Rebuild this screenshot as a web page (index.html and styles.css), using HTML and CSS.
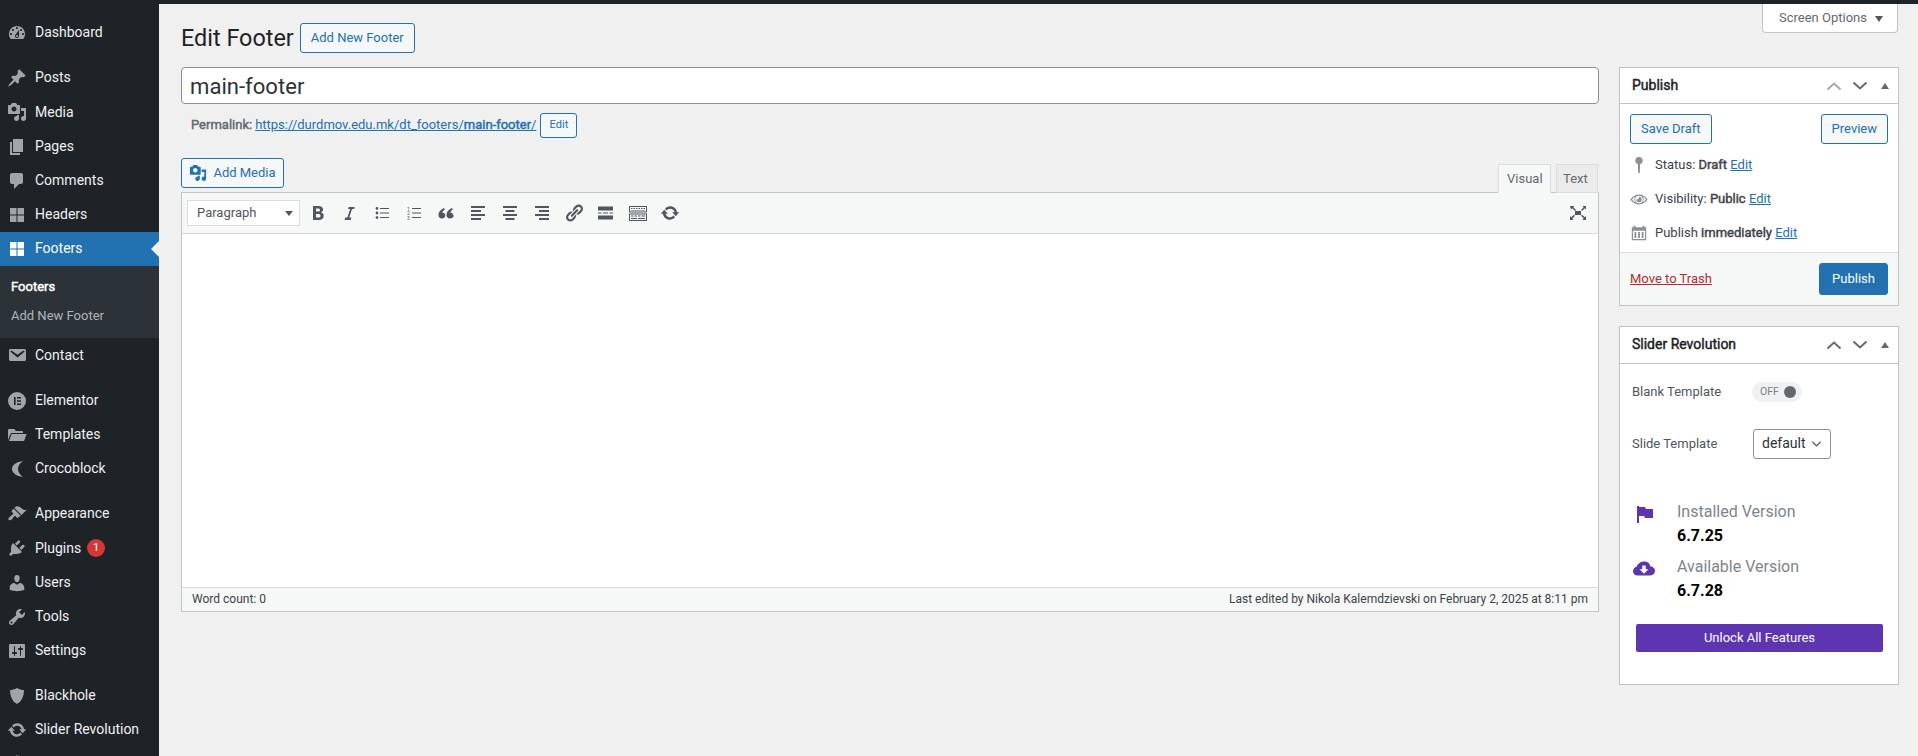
FILE: index.html
```html
<!DOCTYPE html>
<html lang="en">
<head>
<meta charset="utf-8">
<title>Edit Footer</title>
<link rel="stylesheet" href="styles.css">
</head>
<body>
<div class="topstrip"></div>
<div class="layout">
  <nav class="sidebar">
    <ul class="menu">
      <li class="item"><svg class="ico" viewBox="0 0 20 20"><path d="M3.76 16h12.48c1.1-1.37 1.76-3.11 1.76-5 0-4.42-3.58-8-8-8s-8 3.58-8 8c0 1.89.66 3.63 1.76 5zM10 4c.55 0 1 .45 1 1s-.45 1-1 1-1-.45-1-1 .45-1 1-1zM6 6c.55 0 1 .45 1 1s-.45 1-1 1-1-.45-1-1 .45-1 1-1zm8 0c.55 0 1 .45 1 1s-.45 1-1 1-1-.45-1-1 .45-1 1-1zm-5.37 5.55L12 7v6c0 1.1-.9 2-2 2s-2-.9-2-2c0-.57.24-1.08.63-1.45zM4 10c.55 0 1 .45 1 1s-.45 1-1 1-1-.45-1-1 .45-1 1-1zm12 0c.55 0 1 .45 1 1s-.45 1-1 1-1-.45-1-1 .45-1 1-1zm-5 3c0-.55-.45-1-1-1s-1 .45-1 1 .45 1 1 1 1-.45 1-1z"/></svg>Dashboard</li>
      <li class="sep"></li>
      <li class="item"><svg class="ico" viewBox="0 0 20 20"><path d="M10.44 3.02l1.82-1.82 6.36 6.35-1.83 1.82c-1.05-.68-2.48-.57-3.41.36l-.75.75c-.92.93-1.04 2.35-.35 3.41l-1.83 1.82-2.41-2.41-2.8 2.79c-.42.42-3.38 2.71-3.8 2.29s1.86-3.39 2.28-3.81l2.79-2.79L4.1 9.36l1.83-1.82c1.05.69 2.48.57 3.4-.36l.75-.75c.93-.92 1.05-2.35.36-3.41z"/></svg>Posts</li>
      <li class="item"><svg class="ico" viewBox="0 0 20 20"><path d="M13 11V4c0-.55-.45-1-1-1h-1.67L9 1H5L3.67 3H2c-.55 0-1 .45-1 1v7c0 .55.45 1 1 1h10c.55 0 1-.45 1-1zM7 4.5c1.38 0 2.5 1.12 2.5 2.5S8.38 9.5 7 9.5 4.5 8.38 4.5 7 5.62 4.5 7 4.5zM14 6h5v10.5c0 1.38-1.12 2.5-2.5 2.5S14 17.88 14 16.5s1.12-2.5 2.5-2.5c.17 0 .34.02.5.05V9h-3V6zm-4 8.05V13h2v3.5c0 1.38-1.12 2.5-2.5 2.5S7 17.88 7 16.5 8.12 14 9.5 14c.17 0 .34.02.5.05z"/></svg>Media</li>
      <li class="item"><svg class="ico" viewBox="0 0 20 20"><path d="M6 15V2h10v13H6zm-1 1h8v2H3V5h2v11z"/></svg>Pages</li>
      <li class="item"><svg class="ico" viewBox="0 0 20 20"><path d="M5 2h9c1.1 0 2 .9 2 2v7c0 1.1-.9 2-2 2h-2l-5 5v-5H5c-1.1 0-2-.9-2-2V4c0-1.1.9-2 2-2z"/></svg>Comments</li>
      <li class="item"><svg class="ico" viewBox="0 0 20 20"><path d="M3 3h6.500v6.500H3zM10.500 3H17v6.500h-6.500zM3 10.500h6.500V17H3zM10.500 10.500H17V17h-6.500z"/></svg>Headers</li>
      <li class="item current"><svg class="ico" viewBox="0 0 20 20"><path d="M3 3h6.500v6.500H3zM10.500 3H17v6.500h-6.500zM3 10.500h6.500V17H3zM10.500 10.500H17V17h-6.500z"/></svg>Footers</li>
      <li class="submenu">
        <div class="subitem subcurrent">Footers</div>
        <div class="subitem">Add New Footer</div>
      </li>
      <li class="item"><svg class="ico" viewBox="0 0 20 20"><path d="M3.870 4h13.250C18.370 4 19 4.590 19 5.790v8.420c0 1.190-.63 1.790-1.880 1.790H3.870c-1.250 0-1.880-.6-1.880-1.790V5.790c0-1.200.63-1.790 1.880-1.790zm6.620 8.600l6.740-5.530c.24-.2.43-.66.13-1.070-.29-.41-.82-.42-1.170-.17l-5.700 3.860L4.800 5.830c-.35-.25-.88-.24-1.170.17-.3.41-.11.870.13 1.070z"/></svg>Contact</li>
      <li class="sep"></li>
      <li class="item"><svg class="ico" viewBox="0 0 20 20"><path fill-rule="evenodd" d="M10 1a9 9 0 1 0 0 18 9 9 0 0 0 0-18zM7 6h1.600v8H7zM10 6h4v1.600h-4zM10 9.200h4v1.600h-4zM10 12.400h4V14h-4z"/></svg>Elementor</li>
      <li class="item"><svg class="ico" viewBox="0 0 20 20"><path d="M1 5.500V15l2.800-6.500c.2-.4.5-.6 1-.6H16V6.800c0-.5-.4-.9-.9-.9H9L7.400 4H1.900C1.400 4 1 4.500 1 5.500zM4.700 9L2 16h14.400c.4 0 .7-.2.9-.6L19.600 9z"/></svg>Templates</li>
      <li class="item"><svg class="ico" viewBox="0 0 20 20"><path d="M16 2.300C9.500 2.600 5 6 5 10s4.500 7.400 11 7.700c-3-1.800-5-4.500-5-7.700s2-5.900 5-7.700z"/></svg>Crocoblock</li>
      <li class="sep"></li>
      <li class="item"><svg class="ico" viewBox="0 0 20 20"><path d="M14.480 11.060L7.410 3.990l1.500-1.500c.5-.56 2.300-.47 3.510.32 1.210.8 1.430 1.280 2.910 2.100 1.180.64 2.450 1.260 4.450.85zm-.71.71L6.700 4.700 4.930 6.470c-.39.39-.39 1.020 0 1.410l1.060 1.060c.39.39.39 1.030 0 1.420-.6.6-1.430 1.110-2.210 1.690-.35.26-.7.53-1.010.84C1.430 13.710.96 15.120 1.750 15.910s2.200.32 3.010-.35c.31-.32.58-.67.84-1.020.58-.78 1.090-1.610 1.690-2.210.39-.39 1.020-.39 1.410 0l1.060 1.060c.39.39 1.020.39 1.410 0z"/></svg>Appearance</li>
      <li class="item"><svg class="ico" viewBox="0 0 20 20"><path d="M13.110 4.360L9.870 7.600 8 5.730l3.240-3.240c.35-.34 1.050-.2 1.560.32.52.51.66 1.210.31 1.550zm-8 1.770l.91-1.120 9.010 9.010-1.190.84c-.71.71-2.630 1.160-3.820 1.160H6.140L4.900 17.260c-.59.59-1.540.59-2.120 0-.59-.58-.59-1.530 0-2.120l1.240-1.240v-3.880c0-1.130.4-3.190 1.090-3.890zm7.260 3.970l3.240-3.240c.34-.35 1.040-.21 1.550.31.52.51.66 1.210.31 1.550l-3.240 3.250z"/></svg>Plugins<span class="badge">1</span></li>
      <li class="item"><svg class="ico" viewBox="0 0 20 20"><path d="M10 9.250c-2.270 0-2.730-3.440-2.730-3.440C7 4.020 7.820 2 9.970 2c2.160 0 2.980 2.020 2.710 3.810 0 0-.41 3.440-2.680 3.440zm0 2.570L12.720 10c2.390 0 4.520 2.330 4.520 4.530v2.490s-3.650 1.130-7.240 1.130c-3.650 0-7.240-1.130-7.240-1.130v-2.490c0-2.250 1.940-4.480 4.470-4.480z"/></svg>Users</li>
      <li class="item"><svg class="ico" viewBox="0 0 20 20"><path d="M16.680 9.770c-1.340 1.340-3.300 1.670-4.950.99l-5.410 6.520c-.99.99-2.590.99-3.580 0s-.99-2.590 0-3.570l6.520-5.420c-.68-1.650-.35-3.610.99-4.950 1.280-1.280 3.120-1.620 4.720-1.060l-2.890 2.890 2.820 2.820 2.860-2.870c.53 1.580.18 3.390-1.080 4.650zM3.810 16.210c.4.39 1.040.39 1.430 0 .4-.4.4-1.040 0-1.430-.39-.4-1.030-.4-1.430 0-.39.39-.39 1.030 0 1.430z"/></svg>Tools</li>
      <li class="item"><svg class="ico" viewBox="0 0 20 20"><path d="M18 16V4c0-.55-.45-1-1-1H3c-.55 0-1 .45-1 1v12c0 .55.45 1 1 1h14c.55 0 1-.45 1-1zM8 11h1c.55 0 1 .45 1 1s-.45 1-1 1H8v1.500c0 .28-.22.5-.5.5s-.5-.22-.5-.5V13H6c-.55 0-1-.45-1-1s.45-1 1-1h1V5.500c0-.28.22-.5.5-.5s.5.22.5.5V11zm5-2h-1c-.55 0-1-.45-1-1s.45-1 1-1h1V5.500c0-.28.22-.5.5-.5s.5.22.5.5V7h1c.55 0 1 .45 1 1s-.45 1-1 1h-1v5.500c0 .28-.22.5-.5.5s-.5-.22-.5-.5V9z"/></svg>Settings</li>
      <li class="sep"></li>
      <li class="item"><svg class="ico" viewBox="0 0 20 20"><path d="M10 2s3 2 7 2c0 11-7 14-7 14S3 15 3 4c4 0 7-2 7-2z"/></svg>Blackhole</li>
      <li class="item"><svg class="ico" viewBox="0 0 20 20"><path d="M10.200 3.280c3.530 0 6.430 2.610 6.920 6h2.080l-3.500 4-3.500-4h2.320c-.45-1.970-2.210-3.450-4.320-3.450-1.450 0-2.730.71-3.540 1.780L4.950 5.660C6.230 4.200 8.110 3.280 10.200 3.280zm-.4 13.440c-3.520 0-6.430-2.610-6.920-6H.8l3.500-4c1.170 1.330 2.330 2.670 3.500 4H5.480c.45 1.970 2.210 3.450 4.320 3.450 1.450 0 2.730-.71 3.540-1.780l1.710 1.950c-1.280 1.460-3.150 2.380-5.250 2.380z"/></svg>Slider Revolution</li>
      <li class="item"><svg class="ico" viewBox="0 0 20 20"><path d="M10 1l9 9-9 9-9-9z"/></svg></li>
    </ul>
  </nav>
  <main class="main">
    <header class="pagehead">
      <div class="titlewrap">
        <h1 class="title">Edit Footer</h1>
        <a class="btn btn-new">Add New Footer</a>
      </div>
      <div class="screen-options">Screen Options <span class="caret"></span></div>
    </header>
    <div class="columns">
      <section class="editor-col">
        <div class="title-input">main-footer</div>
        <div class="permalink">
          <strong class="perma-label faux">Permalink:</strong>
          <a class="perma-link">https://durdmov.edu.mk/dt_footers/<b class="faux">main-footer</b>/</a>
          <a class="btn btn-edit">Edit</a>
        </div>
        <div class="editor-tools">
          <a class="btn btn-media"><svg class="media-ico" viewBox="0 0 20 20"><path d="M13 11V4c0-.55-.45-1-1-1h-1.670L9 1H5L3.670 3H2c-.55 0-1 .45-1 1v7c0 .55.45 1 1 1h10c.55 0 1-.45 1-1zM7 4.500c1.380 0 2.500 1.120 2.500 2.500S8.380 9.500 7 9.500 4.500 8.380 4.500 7 5.620 4.500 7 4.500zM14 6h5v10.500c0 1.380-1.120 2.500-2.500 2.500S14 17.880 14 16.500s1.120-2.500 2.500-2.500c.17 0 .34.02.5.05V9h-3V6zm-4 8.050V13h2v3.500c0 1.380-1.120 2.500-2.500 2.500S7 17.880 7 16.500 8.120 14 9.500 14c.17 0 .34.02.5.05z"/></svg>Add Media</a>
          <div class="tabs">
            <span class="tab tab-active">Visual</span>
            <span class="tab">Text</span>
          </div>
        </div>
        <div class="editor">
          <div class="toolbar">
            <div class="format-select">Paragraph<span class="select-caret"></span></div>
            <div class="tools">
              <svg class="tool" viewBox="0 0 20 20"><path fill-rule="evenodd" d="M5 3h5.500c2.800 0 4.500 1.200 4.500 3.500 0 1.500-.8 2.500-2 2.900 1.600.3 2.700 1.500 2.700 3.300 0 2.700-2 4.300-5 4.300H5zm3 2.400v3.200h2c1.300 0 2-.6 2-1.700 0-1-.7-1.500-2-1.500zm0 5.500v3.700h2.200c1.500 0 2.300-.7 2.300-1.900s-.8-1.800-2.300-1.800z"/></svg>
              <svg class="tool" viewBox="0 0 20 20"><path d="M14.780 4l-.62 2h-2.130l-2.800 8.500h2.120l-.62 2.500H4.600l.62-2.500h2.140l2.800-8.500H8.030l.62-2z"/></svg>
              <svg class="tool" viewBox="0 0 20 20"><path d="M5 6.800a1.400 1.400 0 1 1 0-2.800 1.400 1.400 0 0 1 0 2.800zM8 5h9v1H8zM5 11.400a1.400 1.400 0 1 1 0-2.800 1.400 1.400 0 0 1 0 2.800zM8 9.500h9v1H8zM5 16a1.400 1.400 0 1 1 0-2.800 1.400 1.400 0 0 1 0 2.800zM8 14h9v1H8z"/></svg>
              <svg class="tool" viewBox="0 0 20 20"><path d="M8 5h9v1H8zM8 9.500h9v1H8zM8 14h9v1H8z"/><text x="3" y="7.500" class="ol-num">1</text><text x="3" y="12" class="ol-num">2</text><text x="3" y="16.500" class="ol-num">3</text></svg>
              <svg class="tool" viewBox="0 0 20 20"><path d="M9.300 12.500c0-1.800-1.400-2.800-2.900-2.600.1-1.500 1-2.700 2.500-3.500L8 5C5 6.300 2.500 8.700 2.500 12c0 2.200 1.400 3.500 3.300 3.500s3.500-1.200 3.500-3zM17.300 12.500c0-1.800-1.400-2.800-2.900-2.600.1-1.500 1-2.700 2.500-3.500L16 5c-3 1.300-5.500 3.700-5.500 7 0 2.200 1.400 3.500 3.300 3.500s4-1.200 4-3z"/></svg>
              <svg class="tool" viewBox="0 0 20 20"><path d="M3 3h14v2H3zM3 7h10v2H3zM3 11h14v2H3zM3 15h10v2H3z"/></svg>
              <svg class="tool" viewBox="0 0 20 20"><path d="M3 3h14v2H3zM5.500 7h9v2h-9zM3 11h14v2H3zM5.500 15h9v2h-9z"/></svg>
              <svg class="tool" viewBox="0 0 20 20"><path d="M3 3h14v2H3zM7 7h10v2H7zM3 11h14v2H3zM7 15h10v2H7z"/></svg>
              <svg class="tool" viewBox="0 0 20 20"><path d="M17.740 2.760c1.680 1.690 1.680 4.410 0 6.100l-1.530 1.520c-1.120 1.120-2.700 1.470-4.140 1.090l2.620-2.610.76-.77.76-.76c.84-.84.84-2.200 0-3.040-.84-.85-2.200-.85-3.040 0l-.77.76-3.380 3.380c-.37-1.440-.02-3.020 1.100-4.140l1.520-1.530c1.690-1.680 4.420-1.680 6.100 0zM8.590 13.430l5.340-5.340c.42-.42.42-1.100 0-1.520-.44-.43-1.130-.39-1.530 0l-5.330 5.340c-.42.42-.42 1.100 0 1.520.44.43 1.130.39 1.520 0zm-.76 2.290l4.140-4.150c.38 1.440.03 3.020-1.090 4.140l-1.520 1.530c-1.690 1.680-4.410 1.680-6.100 0-1.680-1.680-1.680-4.420 0-6.100l1.530-1.520c1.120-1.120 2.700-1.470 4.140-1.100l-4.140 4.150c-.85.84-.85 2.200 0 3.050.84.84 2.200.84 3.040 0z"/></svg>
              <svg class="tool" viewBox="0 0 20 20"><path d="M2 3.500h15v4H2zM2 12.500h15v4H2zM2 9.500h3.500v1H2zM7 9.500h5v1H7zM13.500 9.500H17v1h-3.500z"/></svg>
              <svg class="tool" viewBox="0 0 20 20"><path fill-rule="evenodd" d="M1 3h18v6.500H1zm1 1v4.500h16V4zM3 5h1.500v1H3zM5.500 5H7v1H5.500zM8 5h1.500v1H8zM10.500 5H12v1h-1.500zM13 5h1.500v1H13zM15.500 5H17v1h-1.500zM3 7h14v.6H3zM1 10.500h18V18H1zm1 1V17h16v-5.500zM3 12.500h2.500v1H3zM6.500 12.500H9v1H6.500zM10 12.500h2.500v1H10zM13.500 12.500H17v1h-3.500zM3 15h6v1H3zM10 15h7v1h-7z"/></svg>
              <svg class="tool" viewBox="0 0 20 20"><path d="M10.200 3.280c3.530 0 6.430 2.610 6.920 6h2.080l-3.500 4-3.500-4h2.320c-.45-1.970-2.210-3.450-4.320-3.450-1.450 0-2.730.71-3.540 1.780L4.950 5.660C6.230 4.200 8.110 3.280 10.200 3.280zm-.4 13.440c-3.520 0-6.430-2.610-6.920-6H.8l3.500-4c1.170 1.330 2.330 2.670 3.500 4H5.480c.45 1.970 2.210 3.450 4.320 3.450 1.450 0 2.730-.71 3.540-1.780l1.710 1.950c-1.280 1.460-3.150 2.380-5.250 2.380z"/></svg>
            </div>
            <svg class="tool tool-full" viewBox="0 0 20 20"><path d="M7 8h6v4H7zM2 3h4.500L5.300 4.200 8 7 7 8 4.200 5.300 3 6.500zM18 3v3.500l-1.200-1.200L14 8l-1-1 2.700-2.800L14.500 3zM2 17v-4l1.200 1.300L6 11.800l1 1-2.700 2.600L5.500 17zM18 17h-3.500l1.200-1.600-2.700-2.600 1-1 2.800 2.500 1.200-1.300z"/></svg>
          </div>
          <div class="editor-body"></div>
          <div class="statusbar">
            <span>Word count: 0</span>
            <span>Last edited by Nikola Kalemdzievski on February 2, 2025 at 8:11 pm</span>
          </div>
        </div>
      </section>
      <aside class="side-col">
        <section class="box">
          <div class="box-head">
            <h2 class="box-title faux">Publish</h2>
            <div class="box-arrows">
              <svg class="chev chev-light" viewBox="0 0 16 10"><path d="M1.500 8.500L8 2.500l6.500 6"/></svg>
              <svg class="chev" viewBox="0 0 16 10"><path d="M1.500 1.500L8 7.500l6.500-6"/></svg>
              <span class="tri"></span>
            </div>
          </div>
          <div class="publish-main">
            <div class="publish-btns">
              <a class="btn">Save Draft</a>
              <a class="btn">Preview</a>
            </div>
            <div class="pub-row">
              <svg class="pub-ico" viewBox="0 0 20 20"><path d="M10 1a4 4 0 0 1 1.300 7.800L10.900 19H9.100L8.700 8.800A4 4 0 0 1 10 1z"/></svg>
              <span>Status: <b class="faux">Draft</b> <a class="link">Edit</a></span>
            </div>
            <div class="pub-row">
              <svg class="pub-ico" viewBox="0 0 20 20"><path fill-rule="evenodd" d="M10 5c4 0 7.500 2.300 9.500 5.500C17.500 13.700 14 16 10 16S2.500 13.700.5 10.500C2.500 7.300 6 5 10 5zm0 1.300a4.200 4.200 0 1 0 0 8.400 4.200 4.200 0 0 0 0-8.400zM2.300 10.500c1 1.400 2.300 2.500 3.700 3.200a5.500 5.500 0 0 1 0-6.400c-1.400.7-2.700 1.800-3.700 3.200zM14 7.300a5.500 5.500 0 0 1 0 6.400c1.400-.7 2.700-1.800 3.700-3.200-1-1.400-2.300-2.500-3.700-3.200zM10 7.500a3 3 0 1 1-3 3c1.500.5 3.300-1 3-3z"/></svg>
              <span>Visibility: <b class="faux">Public</b> <a class="link">Edit</a></span>
            </div>
            <div class="pub-row">
              <svg class="pub-ico" viewBox="0 0 20 20"><path fill-rule="evenodd" d="M2 3.500h2V2h2v1.500h8V2h2v1.500h2V18H2zM3.300 7.500v9.200h13.400V7.500zM5 9h2v6.500H5zM9 9h2v6.500H9zM13 9h2v6.500h-2z"/></svg>
              <span>Publish <b class="faux">immediately</b> <a class="link">Edit</a></span>
            </div>
          </div>
          <div class="publish-foot">
            <a class="trash">Move to Trash</a>
            <a class="btn btn-primary">Publish</a>
          </div>
        </section>
        <section class="box box-slider">
          <div class="box-head box-head-slider">
            <h2 class="box-title faux">Slider Revolution</h2>
            <div class="box-arrows">
              <svg class="chev" viewBox="0 0 16 10"><path d="M1.500 8.500L8 2.500l6.500 6"/></svg>
              <svg class="chev" viewBox="0 0 16 10"><path d="M1.500 1.500L8 7.500l6.500-6"/></svg>
              <span class="tri"></span>
            </div>
          </div>
          <div class="slider-body">
            <div class="sr-row sr-row-blank">
              <span class="sr-label">Blank Template</span>
              <span class="toggle">OFF<span class="knob"></span></span>
            </div>
            <div class="sr-row sr-row-slide">
              <span class="sr-label">Slide Template</span>
              <span class="sr-select">default<svg class="sr-chev" viewBox="0 0 12 8"><path d="M1.500 1.500L6 6l4.500-4.500"/></svg></span>
            </div>
            <div class="version version-first">
              <svg class="ver-ico ver-flag" viewBox="0 0 24 24"><path d="M4 3h2v1h6l1 2h7v9h-8l-1-2H6v7H4z"/></svg>
              <div><div class="ver-label">Installed Version</div><div class="ver-num">6.7.25</div></div>
            </div>
            <div class="version">
              <svg class="ver-ico ver-cloud" viewBox="0 0 24 24"><path fill-rule="evenodd" d="M12.500 4.500c3 0 5.300 2 5.900 4.800 2.700.2 4.600 2.100 4.600 4.500 0 2.600-2.200 4.700-4.900 4.700H5.500C2.800 18.500 1 16.500 1 14.200c0-2.200 1.500-4 3.600-4.500C5.700 6.700 8.800 4.500 12.500 4.500zM10.300 8.500v3.800H7.500l4.500 4.500 4.500-4.500h-2.800V8.500z"/></svg>
              <div><div class="ver-label">Available Version</div><div class="ver-num">6.7.28</div></div>
            </div>
            <a class="unlock">Unlock All Features</a>
          </div>
        </section>
      </aside>
    </div>
  </main>
</div>
</body>
</html>
```

FILE: styles.css
```css
* { box-sizing: border-box; }
html, body { margin: 0; padding: 0; height: 756px; overflow: hidden; }
body { background: #f0f0f1; color: #3c434a; font: 13px/1.4 Roboto, "Liberation Sans", sans-serif; }
a { cursor: pointer; }
.faux { font-weight: 400; -webkit-text-stroke: 0.45px currentColor; }
.topstrip { height: 4px; background: #1d2327; }
.layout { display: flex; height: 752px; }

.sidebar { width: 159px; flex: none; background: #1d2327; overflow: hidden; padding-top: 12px; }
.menu { list-style: none; margin: 0; padding: 0; }
.item { display: flex; align-items: center; height: 34.2px; padding-left: 7px; color: #f0f0f1; font-size: 14px; position: relative; }
.ico { width: 20px; height: 20px; margin-right: 8px; fill: #a0a5aa; flex: none; }
.sep { height: 11px; }
.current { background: #2271b1; color: #fff; }
.current .ico { fill: #fff; }
.current::after { content: ""; position: absolute; right: 0; top: 50%; margin-top: -8px; border: 8px solid transparent; border-right-color: #f0f0f1; }
.submenu { background: #2c3338; height: 72px; padding: 6px 0; }
.subitem { font-size: 13px; height: 29px; line-height: 29px; padding-left: 11px; color: #b0b5ba; }
.subcurrent { color: #fff; -webkit-text-stroke: 0.45px currentColor; }
.badge { width: 18px; height: 18px; border-radius: 50%; background: #d63638; color: #fff; font-size: 11px; line-height: 18px; text-align: center; margin-left: 6px; }

.main { flex: 1; min-width: 0; padding: 0 19px 0 22px; }
.pagehead { display: flex; justify-content: space-between; align-items: flex-start; height: 63px; }
.titlewrap { display: flex; align-items: center; padding-top: 19px; }
.title { margin: 0 6px 0 0; font-size: 23.4px; font-weight: 400; line-height: 30px; color: #1d2327; }
.screen-options { width: 136px; height: 29px; margin-right: 1px; background: #fff; border: 1px solid #c3c4c7; border-top: 0; border-radius: 0 0 4px 4px; color: #646970; font-size: 13px; line-height: 28px; padding-left: 16px; }
.caret { display: inline-block; margin-left: 5px; border: 4.5px solid transparent; border-top: 6px solid #50575e; border-bottom: 0; vertical-align: 0; }

.btn { display: inline-flex; align-items: center; justify-content: center; height: 30px; padding: 0 10px; border: 1px solid #2271b1; border-radius: 3px; background: #f6f7f7; color: #2271b1; font-size: 13px; }
.btn-new { width: 115px; padding: 0; }

.columns { display: grid; grid-template-columns: 1418px 280px; column-gap: 20px; align-items: start; }
.title-input { height: 37px; background: #fff; border: 1px solid #8c8f94; border-radius: 4px; font-size: 22.1px; line-height: 36px; padding-left: 8px; color: #2c3338; }
.permalink { display: flex; align-items: center; height: 26px; margin-top: 8px; padding-left: 10px; color: #646970; font-size: 13px; }
.perma-label { margin-right: 3px; }
.perma-link { color: #2271b1; text-decoration: underline; }
.btn-edit { height: 25px; padding: 0 8px; font-size: 11px; margin-left: 4px; width: 37px; }

.editor-tools { display: flex; justify-content: space-between; align-items: flex-end; margin-top: 20px; height: 34px; }
.btn-media { width: 103px; align-self: flex-start; padding: 0; }
.media-ico { width: 18px; height: 18px; fill: #2271b1; margin-right: 6px; }
.tabs { display: flex; gap: 5px; margin-right: 1px; position: relative; top: 1px; }
.tab { height: 29px; padding: 0 8px; line-height: 27px; background: #ebebeb; border: 1px solid #dcdcde; color: #646970; font-size: 13px; }
.tab-active { background: #f6f7f7; border-color: #dcdcde #dcdcde #f6f7f7; width: 53px; }
.tab:not(.tab-active) { width: 42px; padding: 0 6px; }

.editor { border: 1px solid #c3c4c7; background: #fff; }
.toolbar { display: flex; align-items: center; height: 41px; background: #f6f7f7; border-bottom: 1px solid #dcdcde; padding-left: 5px; padding-right: 10px; }
.format-select { position: relative; width: 113px; height: 26px; background: #fff; border: 1px solid #dcdcde; font-size: 13px; color: #50575e; line-height: 24px; padding-left: 9px; }
.select-caret { position: absolute; right: 6px; top: 10px; border: 4px solid transparent; border-top: 5px solid #50575e; border-bottom: 0; }
.tools { display: flex; gap: 12px; margin-left: 8px; }
.tool { width: 20px; height: 20px; fill: #50575e; flex: none; }
.ol-num { font: 5px Roboto, sans-serif; }
.tool-full { margin-left: auto; }
.editor-body { height: 353px; background: #fff; }
.statusbar { display: flex; justify-content: space-between; align-items: center; height: 24px; background: #f6f7f7; border-top: 1px solid #dcdcde; padding: 0 10px; font-size: 12px; color: #3c434a; }

.side-col { display: flex; flex-direction: column; gap: 20px; }
.box { background: #fff; border: 1px solid #c3c4c7; }
.box-head { display: flex; align-items: center; justify-content: space-between; height: 36px; border-bottom: 1px solid #c3c4c7; padding: 0 9px 0 12px; }
.box-head-slider { height: 37px; }
.box-title { margin: 0; font-size: 14px; color: #1d2327; }
.box-arrows { display: flex; align-items: center; gap: 10px; }
.chev { width: 16px; height: 10px; fill: none; stroke: #646970; stroke-width: 2; }
.chev-light { stroke: #a7aaad; }
.tri { border: 4px solid transparent; border-bottom: 6px solid #646970; border-top: 0; margin-left: 3px; }
.publish-main { padding: 10px 10px 2px; }
.publish-btns { display: flex; justify-content: space-between; margin-bottom: 4px; }
.pub-row { display: flex; align-items: center; height: 34px; color: #3c434a; font-size: 13px; }
.pub-ico { width: 18px; height: 18px; fill: #8c8f94; margin-right: 7px; flex: none; }
.link { color: #2271b1; text-decoration: underline; }
.publish-foot { display: flex; align-items: center; justify-content: space-between; height: 53px; background: #f6f7f7; border-top: 1px solid #dcdcde; padding: 0 10px; }
.trash { color: #b32d2e; text-decoration: underline; }
.btn-primary { background: #2271b1; color: #fff; height: 32px; width: 69px; padding: 0; }

.box-slider { height: 359px; }
.slider-body { padding: 0 12px; }
.sr-row { display: flex; align-items: center; }
.sr-label { width: 120px; flex: none; color: #50575e; font-size: 13px; }
.sr-row-blank { height: 20px; margin-top: 18px; }
.toggle { display: flex; align-items: center; justify-content: space-between; width: 50px; height: 20px; border-radius: 10px; background: #eff0f2; color: #7a7f87; font-size: 10.500px; padding: 0 6px 0 8px; }
.knob { width: 12px; height: 12px; border-radius: 50%; background: #63676c; }
.sr-row-slide { height: 30px; margin-top: 27px; }
.sr-select { display: flex; align-items: center; justify-content: space-between; width: 78px; height: 30px; margin-left: 1px; background: #fff; border: 1px solid #8c8f94; border-radius: 3px; color: #2c3338; font-size: 14px; padding: 0 8px; }
.sr-chev { width: 11px; height: 8px; fill: none; stroke: #50575e; stroke-width: 1.300; }
.version { display: flex; align-items: flex-start; height: 55px; margin-left: -2px; }
.version-first { margin-top: 41px; }
.ver-ico { width: 24px; height: 24px; margin: 9px 21px 0 2px; fill: #5e35b1; flex: none; }
.ver-flag { margin: 3px 20px 0 3px; }
.ver-cloud { margin-top: 2px; }
.ver-label { font-size: 16px; line-height: 23px; color: #7e848c; }
.ver-num { font-size: 16px; font-weight: 700; line-height: 26px; color: #000; }
.unlock { display: block; margin: 14px 0 0 4px; width: 247px; height: 28px; background: #5e35b1; border-radius: 2px; color: #fff; font-size: 13px; line-height: 28px; text-align: center; }
```
